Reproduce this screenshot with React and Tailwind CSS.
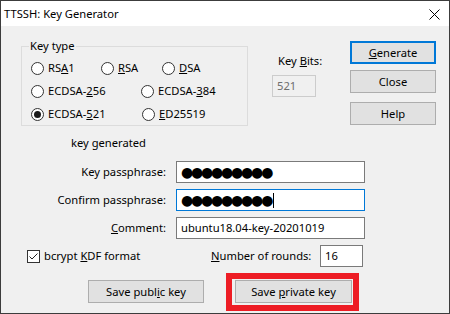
import React from 'react';

const font = { fontFamily: '"Noto Sans", "Liberation Sans", sans-serif' };
const dotFont = { fontFamily: '"DejaVu Sans", sans-serif' };

function Radio({ checked, children, className = '' }) {
  return (
    <div className={`flex items-center gap-[4px] ${className}`}>
      <span className="w-[13px] h-[13px] rounded-full border border-[#333333] bg-white flex items-center justify-center shrink-0">
        {checked && <span className="w-[7px] h-[7px] rounded-full bg-[#1a1a1a]" />}
      </span>
      <span>{children}</span>
    </div>
  );
}

function Button({ children, primary, className = '' }) {
  return (
    <button
      className={`h-[23px] bg-[#e1e1e1] flex items-center justify-center ${primary ? 'border-2 border-[#0078d7]' : 'border border-[#adadad]'} ${className}`}
    >
      <span>{children}</span>
    </button>
  );
}

function Field({ label, children, focused }) {
  return (
    <div className="flex items-center h-[22px]">
      <div className="w-[165px] text-right">{label}</div>
      <div className={`ml-[10px] w-[189px] h-[22px] bg-white border flex items-center pl-[4px] ${focused ? 'border-[#0078d7]' : 'border-[#7a7a7a]'}`}>
        {children}
      </div>
    </div>
  );
}

const dots = '●●●●●●●●●';

export default function App() {
  return (
    <div className="w-[450px] h-[314px] border border-[#3c3c3c] flex flex-col text-[11.2px] text-black leading-[16px] select-none" style={font}>
      <div className="h-[25px] bg-white flex items-center pl-[3px] pr-[9px] shrink-0">
        <span className="flex-1">TTSSH: Key Generator</span>
        <svg width="11" height="11" viewBox="0 0 11 11" className="mt-[1px]">
          <path d="M0.5 0.5 L10.5 10.5 M10.5 0.5 L0.5 10.5" stroke="#000" strokeWidth="1" fill="none" />
        </svg>
      </div>

      <div className="flex-1 bg-[#f0f0f0] flex flex-col">
        <div className="flex pl-[20px] pt-[15px]">
          <div className="relative mt-[5px] w-[227px] h-[80px] border border-[#dcdcdc] flex flex-col pl-[9px] pt-[13px] gap-[7px]">
            <span className="absolute left-[7px] top-[-9px] bg-[#f0f0f0] px-[1px]">Key type</span>
            <div className="flex h-[16px]">
              <Radio className="w-[70px]">RS<u>A</u>1</Radio>
              <Radio className="w-[61px]"><u>R</u>SA</Radio>
              <Radio><u>D</u>SA</Radio>
            </div>
            <div className="flex h-[16px]">
              <Radio className="w-[110px]">ECDSA-<u>2</u>56</Radio>
              <Radio>ECDSA-<u>3</u>84</Radio>
            </div>
            <div className="flex h-[16px]">
              <Radio checked className="w-[111px]">ECDSA-<u>5</u>21</Radio>
              <Radio><u>E</u>D25519</Radio>
            </div>
          </div>

          <div className="ml-[24px] w-[44px] flex flex-col pt-[12px]">
            <span className="ml-[6px] whitespace-nowrap">Key <u>B</u>its:</span>
            <div className="mt-[6px] w-[44px] h-[22px] border border-[#cccccc] bg-[#f0f0f0] text-[#6d6d6d] flex items-center pl-[4px]">521</div>
          </div>

          <div className="ml-[34px] flex flex-col w-[86px]">
            <Button primary><u>G</u>enerate</Button>
            <Button className="mt-[6px]">Close</Button>
            <Button className="mt-[9px]">Help</Button>
          </div>
        </div>

        <div className="mt-[9px] pl-[70px]">key generated</div>

        <div className="mt-[10px] flex flex-col gap-[6px]">
          <Field label="Key passphrase:">
            <span className="text-[14px] tracking-[-2.2px]" style={dotFont}>{dots}</span>
          </Field>
          <Field label="Confirm passphrase:" focused>
            <span className="text-[14px] tracking-[-2.2px]" style={dotFont}>{dots}</span>
            <span className="ml-[2px] w-px h-[15px] bg-black" />
          </Field>
          <Field label={<><u>C</u>omment:</>}>
            <span>ubuntu18.04-key-20201019</span>
          </Field>
        </div>

        <div className="mt-[6px] flex items-center h-[22px] pl-[26px]">
          <div className="w-[184px] flex items-center gap-[4px]">
            <span className="w-[13px] h-[13px] border border-[#333333] bg-white flex items-center justify-center">
              <svg width="11" height="11" viewBox="0 0 11 11">
                <path d="M1.5 5.5 L4 8 L9.5 2.5" stroke="#222" strokeWidth="1" fill="none" />
              </svg>
            </span>
            <span>bcrypt <u>K</u>DF format</span>
          </div>
          <span className="w-[109px]"><u>N</u>umber of rounds:</span>
          <div className="w-[43px] h-[22px] bg-white border border-[#7a7a7a] flex items-center pl-[4px]">16</div>
        </div>

        <div className="mt-[13px] flex pl-[87px] relative">
          <Button className="w-[116px]">Save publ<u>i</u>c key</Button>
          <Button className="ml-[31px] w-[117px]">Save <u>p</u>rivate key</Button>
          <div className="absolute left-[225px] top-[-7px] w-[133px] h-[38px] border-[6px] border-[#ed1c24] pointer-events-none" />
        </div>
      </div>
    </div>
  );
}
